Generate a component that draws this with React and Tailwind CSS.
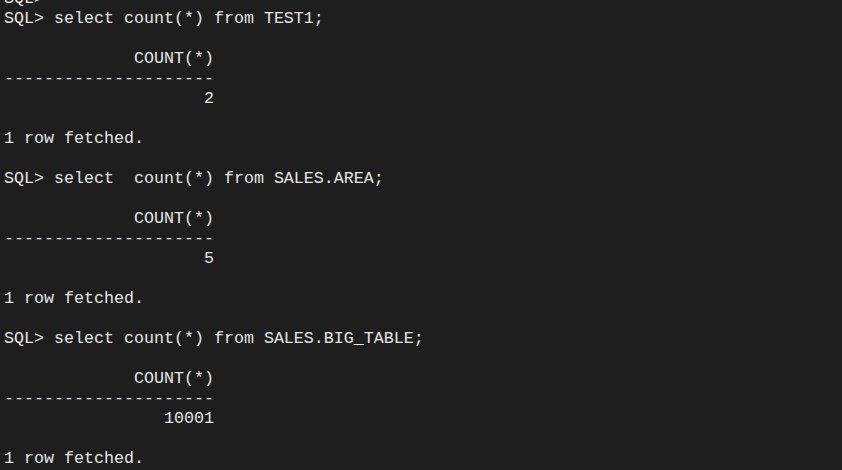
import React from "react";

const lines = [
  "SQL>",
  "SQL> select count(*) from TEST1;",
  "",
  "             COUNT(*)",
  "---------------------",
  "                    2",
  "",
  "1 row fetched.",
  "",
  "SQL> select  count(*) from SALES.AREA;",
  "",
  "             COUNT(*)",
  "---------------------",
  "                    5",
  "",
  "1 row fetched.",
  "",
  "SQL> select count(*) from SALES.BIG_TABLE;",
  "",
  "             COUNT(*)",
  "---------------------",
  "                10001",
  "",
  "1 row fetched.",
];

export default function App() {
  return (
    <div className="w-[842px] h-[470px] overflow-hidden bg-[#1e1e1e]">
      <pre
        className="mt-[-11px] pl-[4px] text-[16.67px] leading-[20px] text-[#e6e6e6] m-0"
        style={{ fontFamily: '"Liberation Mono", "DejaVu Sans Mono", monospace' }}
      >
        {lines.map((l, i) => (
          <div key={i} className="h-[20px] whitespace-pre">
            {l}
          </div>
        ))}
      </pre>
    </div>
  );
}
